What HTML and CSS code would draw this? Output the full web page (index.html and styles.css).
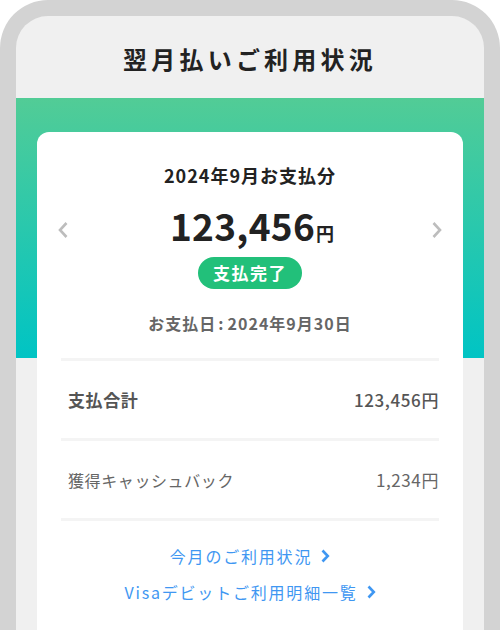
FILE: index.html
```html
<!DOCTYPE html>
<html lang="ja">
<head>
    <meta charset="UTF-8" />
    <title>翌月払いご利用状況</title>
    <link rel="stylesheet" href="styles.css">
</head>
<body>
    <div class="phone">
        <div class="header">翌月払いご利用状況</div>
        <div class="main">
            <div class="card">
                <div class="month">2024年9月お支払分</div>
                <div class="amount-row">
                    <span class="arrow">
                        <svg width="12" height="18" viewBox="0 0 12 18"><path d="M9.5 2 L3 9 L9.5 16" fill="none" stroke="#bdbdbd" stroke-width="2.6"/></svg>
                    </span>
                    <div class="amount">123,456<span class="yen">円</span></div>
                    <span class="arrow">
                        <svg width="12" height="18" viewBox="0 0 12 18"><path d="M2.5 2 L9 9 L2.5 16" fill="none" stroke="#bdbdbd" stroke-width="2.6"/></svg>
                    </span>
                </div>
                <div class="badge-wrap"><span class="badge">支払完了</span></div>
                <div class="date">お支払日<span class="colon">:</span>2024年9月30日</div>

                <div class="line"></div>
                <div class="row">
                    <span class="label bold">支払合計</span>
                    <span class="value strong">123,456円</span>
                </div>
                <div class="line"></div>
                <div class="row">
                    <span class="label">獲得キャッシュバック</span>
                    <span class="value">1,234円</span>
                </div>
                <div class="line"></div>

                <div class="links">
                    <a class="link">今月のご利用状況
                        <svg width="10" height="16" viewBox="0 0 10 16"><path d="M2.5 2.5 L7.8 8 L2.5 13.5" fill="none" stroke="#3f97f2" stroke-width="2.6"/></svg>
                    </a>
                    <a class="link">Visaデビットご利用明細一覧
                        <svg width="10" height="16" viewBox="0 0 10 16"><path d="M2.5 2.5 L7.8 8 L2.5 13.5" fill="none" stroke="#3f97f2" stroke-width="2.6"/></svg>
                    </a>
                </div>
            </div>
        </div>
    </div>
</body>
</html>
```
FILE: styles.css
```css
*{
    margin:0;
    padding:0;
    box-sizing:border-box;
}
body{
    background:#fff;
    font-family:"Noto Sans CJK JP", "Noto Sans", sans-serif;
    color:#222;
    overflow:hidden;
}
.phone{
    width:500px;
    height:660px;
    border:16px solid #d3d3d3;
    border-bottom:none;
    border-radius:48px 48px 0 0;
    background:#f0f0f0;
    overflow:hidden;
}
.header{
    height:82px;
    line-height:86px;
    text-align:center;
    font-size:24px;
    font-weight:bold;
    letter-spacing:4.2px;
    color:#222;
}
.main{
    background:linear-gradient(#52cc96, #00c4c4) no-repeat;
    background-size:100% 260px;
    padding:34px 21px 0;
}
.card{
    background:#fff;
    border-radius:12px 12px 0 0;
    padding:30px 24px 40px;
}
.month{
    text-align:center;
    font-size:18px;
    font-weight:bold;
    line-height:26px;
    letter-spacing:1px;
}
.amount-row{
    margin-top:19px;
    height:44px;
    display:flex;
    align-items:center;
    justify-content:space-between;
    margin-left:-4px;
    margin-right:-4px;
}
.arrow{
    display:flex;
    align-items:center;
    padding-top:2px;
}
.amount{
    font-size:37px;
    font-weight:bold;
    letter-spacing:0.3px;
    line-height:44px;
    padding-left:4px;
}
.yen{
    font-size:18px;
    letter-spacing:0;
    margin-left:1px;
}
.badge-wrap{
    margin-top:6px;
    text-align:center;
}
.badge{
    display:inline-block;
    width:104px;
    height:32px;
    line-height:32px;
    border-radius:16px;
    background:#22c07a;
    color:#fff;
    font-size:17px;
    font-weight:bold;
    letter-spacing:1.5px;
}
.date{
    margin-top:22px;
    text-align:center;
    font-size:16px;
    line-height:24px;
    font-weight:bold;
    color:#666;
    letter-spacing:1px;
}
.colon{
    margin:0 3px 0 2px;
}
.line{
    height:3px;
    background:#f4f4f4;
}
.date + .line{
    margin-top:23px;
}
.row{
    height:77px;
    display:flex;
    align-items:center;
    justify-content:space-between;
    padding:0 0 0 7px;
    color:#666;
    font-size:16px;
    letter-spacing:0.6px;
}
.bold{
    font-weight:bold;
    font-size:17px;
    color:#555;
}
.value{
    font-size:17px;
}
.strong{
    font-weight:500;
    color:#555;
}
.links{
    padding-top:23px;
    display:flex;
    flex-direction:column;
    align-items:center;
    gap:12px;
}
.link{
    display:flex;
    align-items:center;
    gap:8px;
    font-size:16px;
    line-height:24px;
    color:#3f97f2;
    letter-spacing:1.8px;
    cursor:pointer;
}
```
